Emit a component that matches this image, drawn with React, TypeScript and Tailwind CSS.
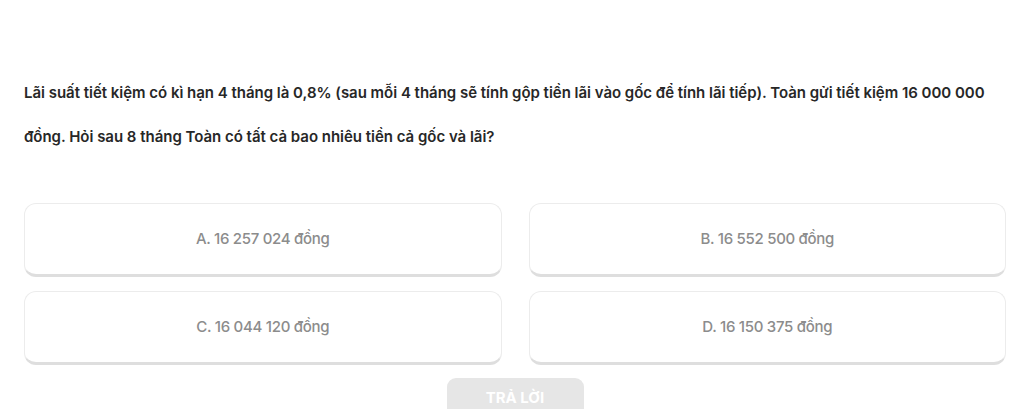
export default function App() {
  const options = [
    "A. 16 257 024 đồng",
    "B. 16 552 500 đồng",
    "C. 16 044 120 đồng",
    "D. 16 150 375 đồng",
  ];

  return (
    <div
      className="h-[409px] overflow-hidden bg-white pl-6 pr-[18px] pt-[71px]"
      style={{ fontFamily: "Inter, 'Noto Sans', sans-serif" }}
    >
      {/* question */}
      <p className="pr-[6px] text-[15px] font-semibold leading-[44px] tracking-[-0.02px] text-[#272727]">
        Lãi suất tiết kiệm có kì hạn 4 tháng là 0,8% (sau mỗi 4 tháng sẽ tính gộp tiền lãi vào gốc để tính lãi tiếp). Toàn gửi tiết kiệm 16 000 000 đồng. Hỏi sau 8 tháng Toàn có tất cả bao nhiêu tiền cả gốc và lãi?
      </p>

      {/* options */}
      <div className="mt-[44px] grid grid-cols-2 gap-x-[27px] gap-y-[14px]">
        {options.map((o) => (
          <button
            key={o}
            className="flex h-[74px] items-center justify-center rounded-[12px] border border-b-[3px] border-[#ececec] border-b-[#dedede] bg-white pt-[1px] text-[15px] font-medium tracking-[-0.3px] text-[#8c8c8c]"
          >
            {o}
          </button>
        ))}
      </div>

      {/* submit */}
      <div className="mt-[13px] flex justify-center">
        <button className="h-[44px] w-[137px] rounded-[9px] bg-[#e6e6e6] pb-[4px] text-[15px] font-bold text-white">
          TRẢ LỜI
        </button>
      </div>
    </div>
  );
}
